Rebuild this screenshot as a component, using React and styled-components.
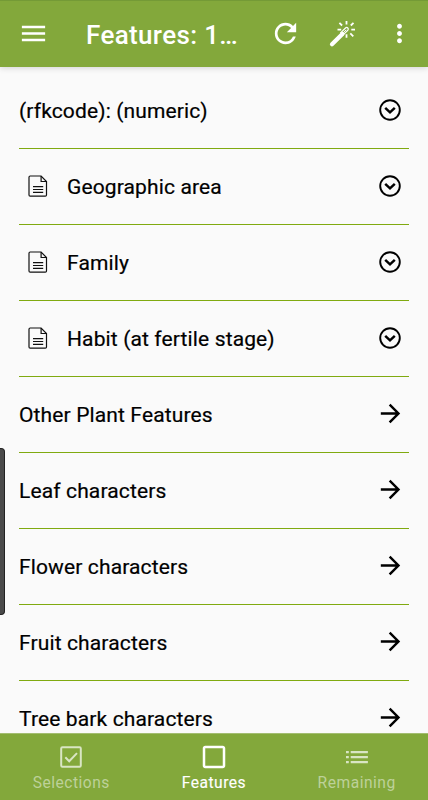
import React from 'react'
import styled, { createGlobalStyle } from 'styled-components'
import { IoMdMenu, IoMdRefresh, IoMdMore, IoMdArrowForward, IoMdSquareOutline } from 'react-icons/io'

const GlobalStyle = createGlobalStyle`
  * {
    box-sizing: border-box;
  }
  body {
    margin: 0;
    background: #fafafa;
    font-family: Roboto, 'Liberation Sans', sans-serif;
  }
`

const Screen = styled.div`
  position: relative;
  display: flex;
  flex-direction: column;
  height: 800px;
  overflow: hidden;
  color: #000;
`

const Header = styled.header`
  z-index: 1;
  flex: none;
  display: flex;
  align-items: center;
  height: 67px;
  padding: 0 0 1px 18px;
  border-top: 1px solid #749a36;
  background: #83a83b;
  color: #fff;
  box-shadow: 0 1px 6px rgba(0, 0, 0, 0.16);
`

const Title = styled.h1`
  flex: 1;
  margin: 0;
  padding: 2px 0 0 37px;
  font-size: 26px;
  font-weight: 500;
  line-height: 32px;
  letter-spacing: 0.35px;
  white-space: nowrap;
`

const HeaderButton = styled.button`
  display: flex;
  align-items: center;
  justify-content: center;
  width: ${props => props.$width || 57}px;
  height: 48px;
  padding: 0;
  border: 0;
  background: none;
  color: inherit;
`

const List = styled.main`
  flex: 1;
  min-height: 0;
  overflow: hidden;
  padding: 6px 19px 0;
`

const Row = styled.div`
  display: flex;
  align-items: center;
  height: 76px;
  padding: 0 7px 2px 0;
  border-bottom: 1px solid #80aa10;
`

const Label = styled.span`
  flex: 1;
  padding-top: 2px;
  font-size: 21px;
  font-weight: 400;
  line-height: 28px;
  letter-spacing: 0.13px;
  -webkit-text-stroke: 0.2px currentColor;
`

const Leading = styled.span`
  display: flex;
  width: 48px;
  padding-left: 9px;
`

const Trailing = styled.span`
  display: flex;
  justify-content: center;
  width: 24px;

  svg {
    flex: none;
  }
`

const Tabs = styled.nav`
  flex: none;
  display: grid;
  grid-template-columns: repeat(3, 1fr);
  height: 67px;
  border-top: 1px solid #a3bd70;
  background: #83a83b;
`

const Tab = styled.button`
  display: flex;
  flex-direction: column;
  align-items: center;
  padding: 8px 0 0;
  border: 0;
  background: none;
  color: ${props => (props.$active ? '#fff' : '#bdd199')};
  font-family: inherit;
  font-size: 15.6px;
  font-weight: 400;
  line-height: 20px;
  letter-spacing: 0.5px;
  -webkit-text-stroke: ${props => (props.$active ? '0.15px' : '0')} currentColor;

  svg {
    margin-bottom: 1px;
    color: ${props => (props.$active ? '#fff' : '#d9e5c4')};
  }
`

// Handle of the side panel, floats over the left edge of the list
const EdgeHandle = styled.div`
  position: absolute;
  z-index: 2;
  top: 448px;
  left: 0;
  width: 5px;
  height: 167px;
  border: 1px solid #222;
  border-left: 0;
  border-radius: 0 4px 4px 0;
  background: #4a4a4a;
`

const WandIcon = () => (
  <svg width="30" height="30" viewBox="0 0 30 30" fill="none" stroke="currentColor">
    <path d="M4 25.2 14.4 15" strokeWidth="4.2" strokeLinecap="round" />
    <path d="m12.3 14.1 5.2-5.1q1.2-1.1 2.3 0t0 2.3l-5.2 5.1" strokeWidth="1.2" />
    <path d="m15.2 13.7 3-2.9" strokeWidth="1" />
    <path
      d="M18.5 2v3.6M18.5 15.2v3.6M9.5 10.6h3.7M23.3 10.6H27M11.4 3.8l2.7 2.7M25.5 3.8l-2.7 2.7M22.3 14.3l3 3"
      strokeWidth="1.8"
    />
  </svg>
)

const PageIcon = () => (
  <svg width="20" height="22" viewBox="0 0 20 22" fill="none" stroke="#111" strokeWidth="1.2">
    <path d="M2.2 1h10.9l5.4 5.5v13.4q0 1.2-1.2 1.2H2.2q-1.2 0-1.2-1.2V2.2Q1 1 2.2 1Z" />
    <path d="M13.1 1v5.5h5.4M5 11.6h10.2M5 14.5h10.2M5 17.4h10.2" />
  </svg>
)

const ExpandIcon = () => (
  <svg width="24" height="24" viewBox="0 0 24 24" fill="none" stroke="#000">
    <circle cx="12" cy="12" r="9.8" strokeWidth="1.9" />
    <path d="M7.2 9.9 12 14.4l4.8-4.5" strokeWidth="2.5" />
  </svg>
)

const CheckedBoxIcon = () => (
  <svg width="30" height="30" viewBox="0 0 30 30" fill="none" stroke="currentColor" strokeWidth="2">
    <rect x="5.2" y="5.2" width="19.6" height="19.6" rx="1.2" />
    <path d="m9.3 15.3 3.9 4 7.8-8.2" />
  </svg>
)

const BulletsIcon = () => (
  <svg width="30" height="30" viewBox="0 0 30 30" fill="currentColor">
    <path d="M4 8.9h2.8v2.4H4zM4 13.9h2.8v2.4H4zM4 18.9h2.8v2.4H4zM8.7 8.9h17.2v2.4H8.7zM8.7 13.9h17.2v2.4H8.7zM8.7 18.9h17.2v2.4H8.7z" />
  </svg>
)

const features = [
  { label: '(rfkcode): (numeric)', expands: true },
  { label: 'Geographic area', expands: true, page: true },
  { label: 'Family', expands: true, page: true },
  { label: 'Habit (at fertile stage)', expands: true, page: true },
  { label: 'Other Plant Features' },
  { label: 'Leaf characters' },
  { label: 'Flower characters' },
  { label: 'Fruit characters' },
  { label: 'Tree bark characters' },
]

const App = () => (
  <>
    <GlobalStyle />
    <Screen>
      <Header>
        <HeaderButton $width={31} aria-label="Menu">
          <IoMdMenu size={31} />
        </HeaderButton>
        <Title>Features: 1…</Title>
        <HeaderButton aria-label="Reset">
          <IoMdRefresh size={31} />
        </HeaderButton>
        <HeaderButton aria-label="Best feature">
          <WandIcon />
        </HeaderButton>
        <HeaderButton aria-label="More">
          <IoMdMore size={31} />
        </HeaderButton>
      </Header>
      <List>
        {features.map(({ label, expands, page }) => (
          <Row key={label}>
            {page && (
              <Leading>
                <PageIcon />
              </Leading>
            )}
            <Label>{label}</Label>
            <Trailing>{expands ? <ExpandIcon /> : <IoMdArrowForward size={29} />}</Trailing>
          </Row>
        ))}
      </List>
      <Tabs>
        <Tab>
          <CheckedBoxIcon />
          Selections
        </Tab>
        <Tab $active>
          <IoMdSquareOutline size={30} />
          Features
        </Tab>
        <Tab>
          <BulletsIcon />
          Remaining
        </Tab>
      </Tabs>
      <EdgeHandle />
    </Screen>
  </>
)

export default App
